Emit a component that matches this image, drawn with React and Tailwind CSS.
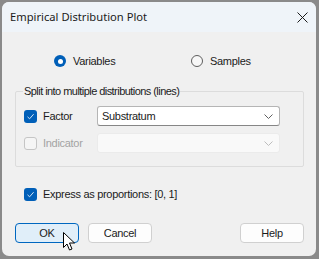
import { useState } from "react";

function Radio({ checked, label }) {
  return (
    <div className="flex items-center">
      {checked ? (
        <span className="flex h-[12px] w-[12px] items-center justify-center rounded-full bg-[#005fb8]">
          <span className="h-[5px] w-[5px] rounded-full bg-white" />
        </span>
      ) : (
        <span className="h-[12px] w-[12px] rounded-full border border-[#5e5e5e] bg-[#f7f7f7]" />
      )}
      <span className="ml-[7px] text-[#1b1b1b]">{label}</span>
    </div>
  );
}

function Check({ checked, disabled }) {
  if (checked) {
    return (
      <span className="flex h-[13px] w-[13px] items-center justify-center rounded-[3px] bg-[#005fb8]">
        <svg width="9" height="9" viewBox="0 0 9 9" fill="none">
          <path d="M1.5 4.8 L3.6 6.8 L7.6 2.2" stroke="#cfe3f5" strokeWidth="1" />
        </svg>
      </span>
    );
  }
  return (
    <span
      className={
        "h-[13px] w-[13px] rounded-[3px] border " +
        (disabled ? "border-[#c5c5c5] bg-[#f5f5f5]" : "border-[#5e5e5e] bg-white")
      }
    />
  );
}

function Chevron({ color }) {
  return (
    <svg width="9" height="5" viewBox="0 0 9 5" fill="none">
      <path d="M0.5 0.5 L4.5 4.5 L8.5 0.5" stroke={color} strokeWidth="1" />
    </svg>
  );
}

function Button({ label, primary }) {
  return (
    <div
      className={
        "flex h-[20px] w-[64px] items-center justify-center rounded-[4px] border text-[#1b1b1b] " +
        (primary ? "border-[#0067c0] bg-[#e0eef9]" : "border-[#d0d0d0] bg-[#fdfdfd]")
      }
    >
      {label}
    </div>
  );
}

export default function App() {
  const [mode] = useState("variables");

  return (
    <div
      className="h-[259px] w-[319px] bg-[#8a8a8a] pl-[2px] pt-[2px] pr-[3px] pb-[3px] text-[11px] leading-none tracking-[-0.3px]"
      style={{ fontFamily: "'Liberation Sans', Arial, sans-serif" }}
    >
      <div className="relative flex h-full flex-col overflow-hidden rounded-[7px] bg-[#f0f0f0]">
        <div className="flex h-[30px] shrink-0 items-center justify-between bg-[#eff4f9] pl-[8px] pr-[8px]">
          <span
            className="text-[11.2px] tracking-normal text-[#1b1b1b]"
            style={{ fontFamily: "'Noto Sans', sans-serif" }}
          >
            Empirical Distribution Plot
          </span>
          <svg width="11" height="11" viewBox="0 0 11 11" fill="none">
            <path d="M0.5 0.5 L10.5 10.5 M10.5 0.5 L0.5 10.5" stroke="#1b1b1b" strokeWidth="1" />
          </svg>
        </div>

        <div className="flex flex-col px-[13px]">
          <div className="mt-[23px] flex h-[12px] items-center">
            <div className="ml-[39px] w-[137px]">
              <Radio checked={mode === "variables"} label="Variables" />
            </div>
            <Radio checked={mode === "samples"} label="Samples" />
          </div>

          <fieldset className="mt-[19px] h-[81px] w-[289px] rounded-[2px] border border-[#dcdcdc] px-[8px]">
            <legend className="-ml-[1px] px-[1px] tracking-[-0.55px] text-[#1b1b1b]">
              Split into multiple distributions (lines)
            </legend>
            <div className="mt-[9px] flex items-center">
              <Check checked />
              <span className="ml-[6px] w-[54px] text-[#1b1b1b]">Factor</span>
              <div className="flex h-[20px] w-[183px] items-center justify-between rounded-[3px] border border-[#b5b5b5] border-b-[#868686] bg-white pl-[4px] pr-[6px]">
                <span className="text-[#1b1b1b]">Substratum</span>
                <Chevron color="#606060" />
              </div>
            </div>
            <div className="mt-[7px] flex items-center">
              <Check disabled />
              <span className="ml-[6px] w-[54px] text-[#a3a3a3]">Indicator</span>
              <div className="flex h-[20px] w-[183px] items-center justify-end rounded-[3px] border border-[#ebebeb] bg-[#f9f9f9] pr-[6px]">
                <Chevron color="#bdbdbd" />
              </div>
            </div>
          </fieldset>

          <div className="mt-[21px] ml-[9px] flex items-center">
            <Check checked />
            <span className="ml-[6px] text-[#1b1b1b]">Express as proportions: [0, 1]</span>
          </div>

          <div className="mt-[22px] flex items-center">
            <Button label="OK" primary />
            <div className="ml-[9px]">
              <Button label="Cancel" />
            </div>
            <div className="ml-auto mr-[-1px]">
              <Button label="Help" />
            </div>
          </div>
        </div>

        <svg className="absolute left-[61px] top-[230px]" width="13" height="19" viewBox="0 0 13 19">
          <path d="M0.5 0.5 L0.5 15.5 L4 12 L6.5 18 L9 17 L6.5 11 L11.5 11 Z" fill="#ffffff" stroke="#000000" strokeWidth="1" strokeLinejoin="round" />
        </svg>
      </div>
    </div>
  );
}
